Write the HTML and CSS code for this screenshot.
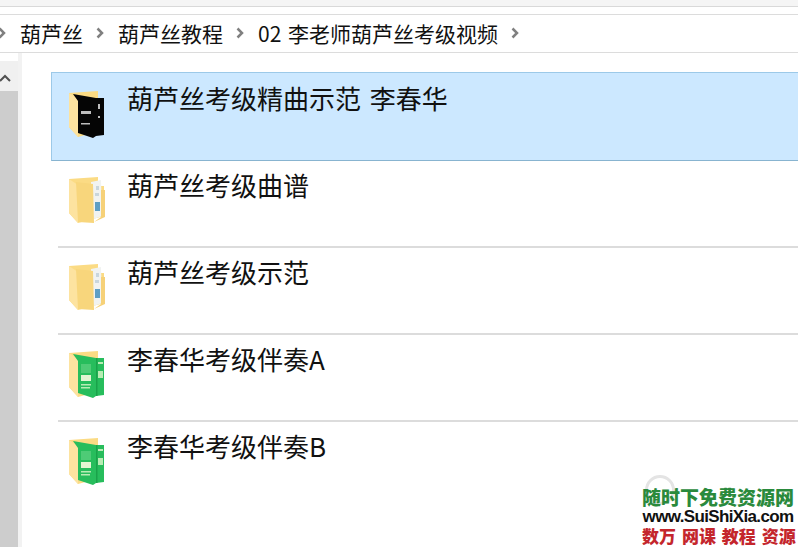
FILE: index.html
```html
<!DOCTYPE html>
<html>
<head>
    <meta charset="UTF-8">
    <title>李老师葫芦丝考级视频</title>
    <link rel="stylesheet" href="styles.css">
</head>
<body>
    <svg class="defs" width="0" height="0">
        <symbol id="folder-back" viewBox="0 0 38 50">
            <path d="M1 3 L30 1 L30 10 L36 10 L36 40 L10 47 L1 37 Z" fill="#fbdb84"/>
            <path d="M1 3 L10 9 L10 47 L1 37 Z" fill="#fde3a0"/>
        </symbol>
        <symbol id="folder-plain" viewBox="0 0 38 50">
            <use href="#folder-back"/>
            <path d="M23 6 L33 4 L34 40 L23 44 Z" fill="#f1f3f1"/>
            <path d="M28 10h3v4h-3zM27 17h4v3h-4z" fill="#c9d6dc"/>
            <path d="M27 26h5v9h-5z" fill="#5f9fc4"/>
            <path d="M8 6 L25 8 L26 47 L10 46 Z" fill="#f8d67c"/>
            <path d="M33 14 L37 14 L37 41 L26 46 L33 41 Z" fill="#f6d178"/>
        </symbol>
        <symbol id="folder-green" viewBox="0 0 38 50">
            <use href="#folder-back"/>
            <path d="M5 4 L28 8 L36 8 L36 45 L28 46 L25 48 L10 43 L10 11 Z" fill="#27bd5c"/>
            <path d="M13 14h10v9h-10z" fill="#4ecb76"/>
            <path d="M13 25h10v6h-10z" fill="#e2f5d2"/>
            <path d="M13 34h10v1.500h-10zM13 37h9v1.500h-9z" fill="#b8ecb4"/>
            <path d="M30 12h5v2h-5zM30 21h5v7h-5z" fill="#b8ecb4"/>
            <path d="M28 8h1.500v38h-1.500z" fill="#1aa24a"/>
        </symbol>
    </svg>

    <div class="tabstrip"></div>

    <!-- Breadcrumb -->
    <nav class="crumbs">
        <svg class="chev chev-first" viewBox="0 0 8 12"><path d="M1.500 1.500 L6 6 L1.500 10.500" /></svg>
        <span>葫芦丝</span>
        <svg class="chev" viewBox="0 0 8 12"><path d="M1.500 1.500 L6 6 L1.500 10.500" /></svg>
        <span>葫芦丝教程</span>
        <svg class="chev" viewBox="0 0 8 12"><path d="M1.500 1.500 L6 6 L1.500 10.500" /></svg>
        <span>02 李老师葫芦丝考级视频</span>
        <svg class="chev" viewBox="0 0 8 12"><path d="M1.500 1.500 L6 6 L1.500 10.500" /></svg>
    </nav>

    <div class="content">
        <!-- Scrollbar -->
        <div class="scrollbar">
            <div class="scroll-btn">
                <svg viewBox="0 0 12 8" width="12" height="8"><path d="M1 7 L6 2 L11 7" /></svg>
            </div>
            <div class="scroll-thumb"></div>
        </div>

        <!-- Folder list -->
        <ul class="files">
            <li class="file selected">
                <svg class="folder" viewBox="0 0 38 50">
                    <use href="#folder-back"/>
                    <path d="M5 4 L28 8 L36 8 L36 45 L28 46 L25 48 L10 43 L10 11 Z" fill="#050505"/>
                    <path d="M13 21h10v3h-10zM13 33h9v1.500h-9zM30 14h2v5h-2zM30 26h2v2h-2z" fill="#bdbdbd"/>
                </svg>
                <span class="name">葫芦丝考级精曲示范 李春华</span>
            </li>
            <li class="file">
                <svg class="folder" viewBox="0 0 38 50"><use href="#folder-plain"/></svg>
                <span class="name">葫芦丝考级曲谱</span>
            </li>
            <li class="file">
                <svg class="folder" viewBox="0 0 38 50"><use href="#folder-plain"/></svg>
                <span class="name">葫芦丝考级示范</span>
            </li>
            <li class="file">
                <svg class="folder" viewBox="0 0 38 50"><use href="#folder-green"/></svg>
                <span class="name">李春华考级伴奏A</span>
            </li>
            <li class="file">
                <svg class="folder" viewBox="0 0 38 50"><use href="#folder-green"/></svg>
                <span class="name">李春华考级伴奏B</span>
            </li>
        </ul>
    </div>

    <!-- Site watermark over the bottom corner -->
    <div class="watermark">
        <div class="wm-logo"></div>
        <div class="wm-green">随时下免费资源网</div>
        <div class="wm-url">www.SuiShiXia.com</div>
        <div class="wm-red">数万 网课 教程 资源</div>
    </div>
</body>
</html>
```

FILE: styles.css
```css
* {
    box-sizing: border-box;
}
html, body {
    height: 100%;
}
body {
    margin: 0;
    overflow: hidden;
    display: flex;
    flex-direction: column;
    background: #fff;
    color: #111;
    font-family: "Noto Sans CJK SC", "Noto Sans", sans-serif;
}
.defs {
    position: absolute;
}
.tabstrip {
    height: 14px;
    flex: none;
    background: linear-gradient(#f5f5f5 0, #f5f5f5 6px, #d9d9d9 6px, #d9d9d9 7px, #fff 7px);
}
.crumbs {
    height: 39px;
    flex: none;
    display: flex;
    align-items: center;
    border-top: 1px solid #dcdcdc;
    border-bottom: 1px solid #dcdcdc;
    font-size: 21px;
    line-height: 1;
    padding-bottom: 1px;
    word-spacing: 2px;
}
.chev {
    width: 8px;
    height: 12px;
    margin: 0 14.500px 0 12.500px;
    flex: none;
}
.chev-first {
    margin: 0 14px 0 -2px;
}
.chev path {
    fill: none;
    stroke: #808080;
    stroke-width: 2.500;
}
.content {
    flex: 1;
    display: flex;
    min-height: 0;
}
.scrollbar {
    width: 22px;
    flex: none;
    padding-top: 8px;
    display: flex;
    flex-direction: column;
    border-right: 4px solid #f2f2f2;
}
.scroll-btn {
    height: 30px;
    background: #f0f0f0;
    display: flex;
    padding-top: 3px;
    align-items: center;
}
.scroll-btn svg {
    margin-left: -1px;
}
.scroll-btn path {
    fill: none;
    stroke: #505050;
    stroke-width: 2;
}
.scroll-thumb {
    flex: 1;
    background: #cdcdcd;
}
.files {
    flex: 1;
    list-style: none;
    margin: 0;
    padding: 19px 0 0 29px;
}
.file {
    height: 87px;
    margin-left: 7px;
    border-bottom: 2px solid #dcdcdc;
    display: flex;
    padding: 9px 0 0 10px;
    font-size: 26px;
    line-height: 30px;
}
.file:last-child {
    border-bottom: none;
}
.selected {
    height: 89px;
    margin-left: 0;
    padding: 10px 0 0 16px;
    background: #cce8ff;
    border: 1px solid #9cc9e8;
    border-bottom-color: #88b4d0;
    border-right: none;
}
.folder {
    width: 38px;
    height: 50px;
    flex: none;
    margin: 6px 21px 0 0;
}
.selected .folder {
    margin-top: 7px;
}
.name {
    white-space: nowrap;
    word-spacing: 3px;
}
.watermark {
    position: absolute;
    right: 4px;
    bottom: 1px;
    width: 152px;
    text-align: center;
    white-space: nowrap;
    font-weight: 900;
}
.wm-logo {
    position: absolute;
    left: 3px;
    top: -12px;
    width: 30px;
    height: 30px;
    border: 3px solid #e4e4e4;
    border-radius: 50%;
}
.wm-green, .wm-url, .wm-red {
    position: relative;
}
.wm-green {
    color: #2a8a3c;
    font-size: 19px;
    line-height: 20px;
}
.wm-url {
    color: #111;
    font-size: 17px;
    line-height: 19px;
    font-family: "Liberation Sans", sans-serif;
    font-weight: bold;
    letter-spacing: -0.650px;
}
.wm-red {
    color: #c4262c;
    font-size: 17px;
    line-height: 20px;
    word-spacing: 2px;
}
```
